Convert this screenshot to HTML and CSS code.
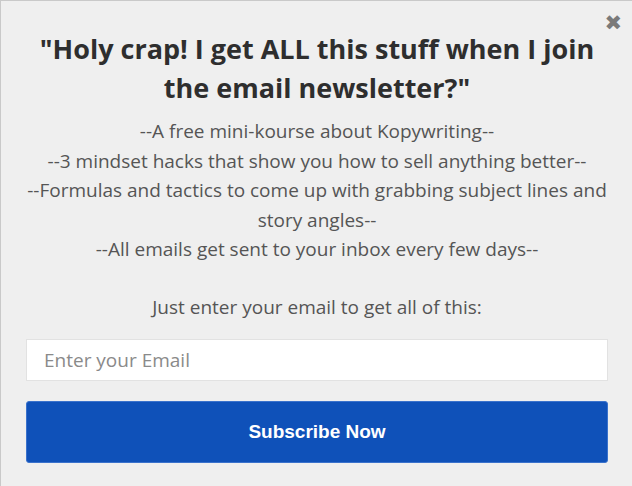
FILE: index.html
```html
<!DOCTYPE html>
<html lang="en">
<head>
    <meta charset="UTF-8">
    <meta name="viewport" content="width=device-width, initial-scale=1.0">
    <title>Newsletter</title>
    <link rel="stylesheet" href="styles.css">
</head>
<body>
    <div class="popup">
        <button class="close" aria-label="Close">&#10006;</button>
        <h1 class="title">"Holy crap! I get ALL this stuff when I join the email newsletter?"</h1>
        <div class="perks">
            <p>--A free mini-kourse about Kopywriting--</p>
            <p>--3 mindset hacks that show you how to sell anything better--</p>
            <p>--Formulas and tactics to come up with grabbing subject lines and story angles--</p>
            <p>--All emails get sent to your inbox every few days--</p>
        </div>
        <p class="cta">Just enter your email to get all of this:</p>
        <form class="signup" onsubmit="return false">
            <input type="email" placeholder="Enter your Email">
            <button type="submit">Subscribe Now</button>
        </form>
    </div>
</body>
</html>
```

FILE: styles.css
```css
body {
    margin: 0;
    background-color: #efefef;
    font-family: "Open Sans", sans-serif;
    overflow: hidden;
}

.popup {
    position: relative;
    box-sizing: border-box;
    width: 632px;
    height: 486px;
    border-top: 1px solid #c9c9c9;
    border-left: 1px solid #c9c9c9;
    padding: 28px 24px 0 25px;
    text-align: center;
}

.close {
    position: absolute;
    top: 10px;
    right: 10px;
    background: none;
    border: none;
    padding: 0;
    color: #7a7a7a;
    font-size: 21px;
    font-weight: bold;
    font-family: "DejaVu Sans", sans-serif;
    cursor: pointer;
}

.title {
    margin: 0 0 10px;
    font-size: 27px;
    line-height: 39px;
    font-weight: 700;
    color: #2e2e2e;
}

.perks p {
    margin: 0;
    font-size: 19px;
    line-height: 29.5px;
    color: #555555;
}

.cta {
    margin: 28px 0 17px;
    font-size: 19px;
    line-height: 29px;
    color: #555555;
}

.signup {
    display: flex;
    flex-direction: column;
    gap: 20px;
}

.signup input {
    box-sizing: border-box;
    height: 42px;
    border: 1px solid #e2e2e2;
    background-color: #ffffff;
    padding: 0 17px;
    font-family: "Open Sans", sans-serif;
    font-size: 19px;
    color: #333333;
}

.signup input::placeholder {
    color: #8a8a8a;
}

.signup button {
    height: 62px;
    border: 1px solid #3a72cc;
    border-radius: 3px;
    background-color: #0f51b9;
    color: #ffffff;
    font-family: "Liberation Sans", Arial, sans-serif;
    font-weight: bold;
    font-size: 19px;
    cursor: pointer;
}
```
